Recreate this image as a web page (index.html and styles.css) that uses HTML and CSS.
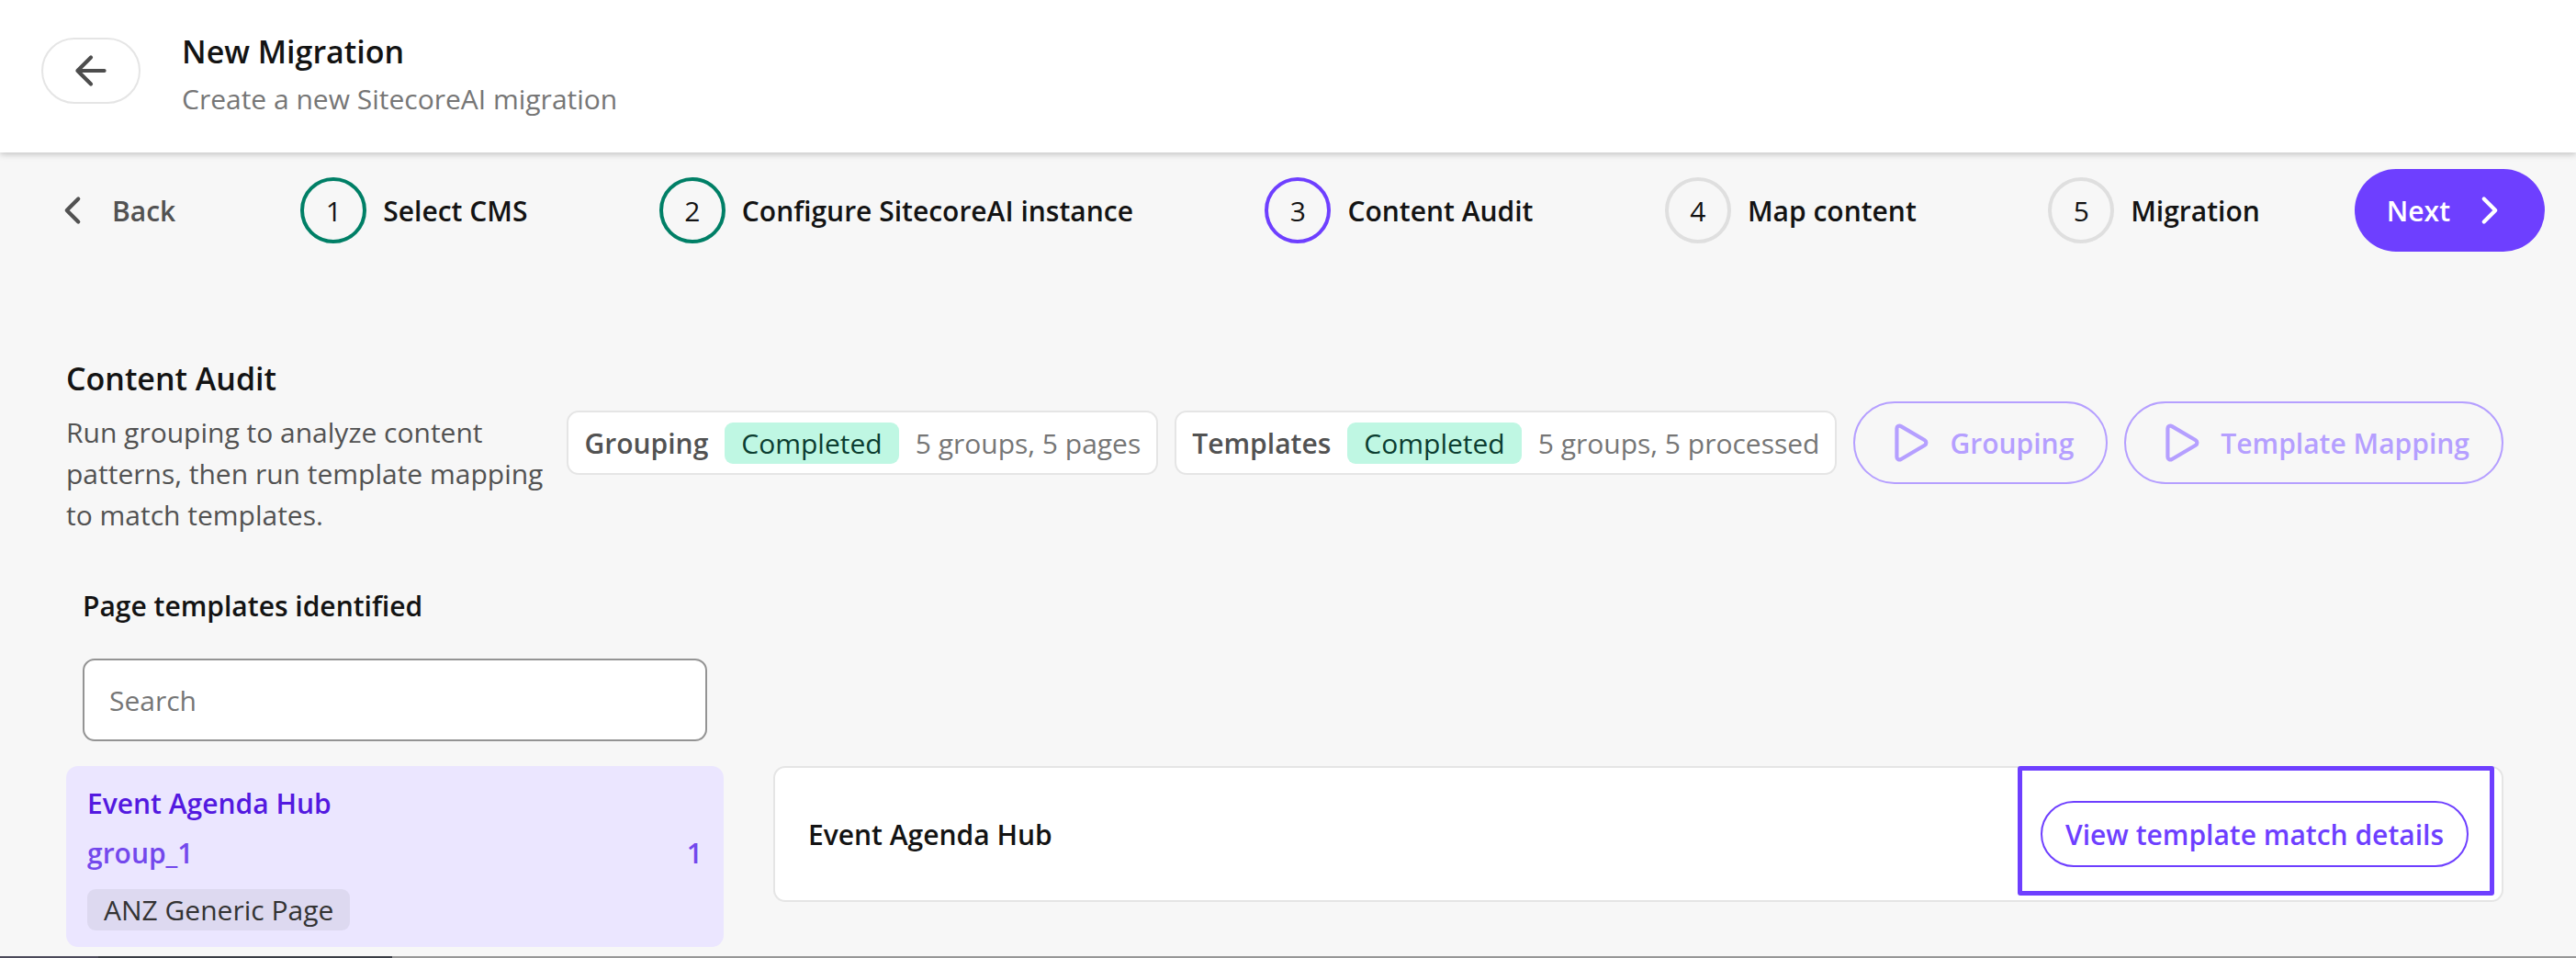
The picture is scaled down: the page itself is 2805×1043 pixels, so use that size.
FILE: index.html
```
<!DOCTYPE html>
<html lang="en">
<head>
<meta charset="utf-8">
<meta name="viewport" content="width=device-width, initial-scale=1">
<title>New Migration</title>
<link rel="stylesheet" href="styles.css">
</head>
<body>
<header class="topbar">
  <button class="back-button" type="button" aria-label="Go back">
    <svg class="icon" viewBox="0 0 24 24" aria-hidden="true"><path d="M19 12H5M12 5l-7 7 7 7"/></svg>
  </button>
  <div class="topbar-text">
    <h1 class="title">New Migration</h1>
    <p class="subtitle">Create a new SitecoreAI migration</p>
  </div>
</header>
<main>
  <nav class="stepper" aria-label="Migration steps">
    <button class="step-back" type="button">
      <svg class="icon" viewBox="0 0 24 24" aria-hidden="true"><path d="M15 6l-6 6 6 6"/></svg>
      Back
    </button>
    <ol class="steps">
      <li class="step"><span class="step-number done">1</span>Select CMS</li>
      <li class="step"><span class="step-number done">2</span>Configure SitecoreAI instance</li>
      <li class="step" aria-current="step"><span class="step-number current">3</span>Content Audit</li>
      <li class="step"><span class="step-number">4</span>Map content</li>
      <li class="step"><span class="step-number">5</span>Migration</li>
    </ol>
    <button class="step-next" type="button">
      Next
      <svg class="icon" viewBox="0 0 24 24" aria-hidden="true"><path d="M9 6l6 6-6 6"/></svg>
    </button>
  </nav>

  <section class="audit">
    <div class="audit-intro">
      <h2 class="title">Content Audit</h2>
      <p class="audit-copy">Run grouping to analyze content patterns, then run template mapping to match templates.</p>
    </div>
    <div class="audit-tools">
      <div class="status"><strong class="status-name">Grouping</strong><span class="badge">Completed</span><span>5 groups, 5 pages</span></div>
      <div class="status"><strong class="status-name">Templates</strong><span class="badge">Completed</span><span>5 groups, 5 processed</span></div>
      <button class="run-button" type="button" disabled>
        <svg class="icon" viewBox="0 0 24 24" aria-hidden="true"><path d="M5 4.600v14.800c0 1.200 1.200 1.800 2.200 1.200l12.400-7.300c1-.6 1-2 0-2.600L7.200 3.400C6.200 2.800 5 3.400 5 4.600z"/></svg>
        Grouping
      </button>
      <button class="run-button" type="button" disabled>
        <svg class="icon" viewBox="0 0 24 24" aria-hidden="true"><path d="M5 4.600v14.800c0 1.200 1.200 1.800 2.200 1.200l12.400-7.300c1-.6 1-2 0-2.600L7.200 3.400C6.200 2.800 5 3.400 5 4.600z"/></svg>
        Template Mapping
      </button>
    </div>
  </section>

  <section class="templates">
    <div class="template-list">
      <div class="template-search">
        <label class="search-label" for="search">Page templates identified</label>
        <input class="search-input" id="search" type="search" placeholder="Search">
      </div>
      <a class="template-item" href="#details">
        <span class="template-name">Event Agenda Hub</span>
        <span class="template-meta"><span>group_1</span><span>1</span></span>
        <span class="tag">ANZ Generic Page</span>
      </a>
    </div>
    <article class="detail-card" id="details">
      <h3 class="detail-title">Event Agenda Hub</h3>
      <div class="highlight">
        <button class="details-button" type="button">View template match details</button>
      </div>
    </article>
  </section>
</main>
<div class="bottom-edge"></div>
</body>
</html>
```
FILE: styles.css
```
* {
  box-sizing: border-box;
}

body {
  margin: 0;
  min-height: 100vh;
  display: flex;
  flex-direction: column;
  background: #f7f7f7;
  color: #131313;
  font: 400 30px/45px "Open Sans", "Noto Sans", sans-serif;
}

h1, h2, h3, p, ol {
  margin: 0;
  padding: 0;
}

button, input {
  font: inherit;
  color: inherit;
}

button {
  display: flex;
  align-items: center;
  justify-content: center;
  flex: none;
  padding: 0;
  border: 0;
  background: none;
  white-space: nowrap;
}

main {
  flex: 1;
}

.icon {
  width: 50px;
  height: 50px;
  flex: none;
  fill: none;
  stroke: currentColor;
  stroke-width: 2;
  stroke-linecap: round;
  stroke-linejoin: round;
}

.topbar {
  display: flex;
  align-items: flex-start;
  gap: 45px;
  height: 166px;
  padding: 29px 45px 0;
  background: #fff;
  box-shadow: 0 2px 7px rgba(0, 0, 0, .22);
}

.back-button {
  width: 108px;
  height: 72px;
  margin-top: 12px;
  border: 2px solid #e5e5e5;
  border-radius: 36px;
  color: #4d4d4d;
}

.title {
  font-size: 34px;
  line-height: 54px;
  font-weight: 600;
}

.topbar .title {
  margin-bottom: 2px;
}

.subtitle {
  color: #767676;
}

.stepper {
  display: flex;
  align-items: center;
  height: 126px;
  padding: 0 34px 0 54px;
  font-weight: 600;
}

.step-back {
  gap: 18px;
  color: #525252;
}

.steps {
  flex: 1;
  display: flex;
  justify-content: space-between;
  padding: 0 103px 0 136px;
  list-style: none;
}

.step {
  display: flex;
  align-items: center;
  gap: 18px;
  white-space: nowrap;
}

.step-number {
  display: flex;
  align-items: center;
  justify-content: center;
  width: 72px;
  height: 72px;
  border: 4px solid #dfdfdf;
  border-radius: 50%;
  font-weight: 400;
}

.step-number.done {
  border-color: #007f66;
}

.step-number.current {
  border-color: #6e3fff;
}

.step-next {
  height: 90px;
  gap: 18px;
  padding: 0 35px;
  border-radius: 45px;
  background: #6e3fff;
  color: #fff;
}

.audit {
  display: flex;
  align-items: center;
  justify-content: space-between;
  gap: 18px;
  padding: 93px 79px 0 72px;
}

.audit-intro {
  flex: 1;
}

.audit-copy {
  padding-top: 9px;
  color: #525252;
}

.audit-tools {
  display: flex;
  align-items: center;
  gap: 18px;
  padding-bottom: 4px;
}

.status {
  display: flex;
  align-items: center;
  gap: 18px;
  height: 70px;
  padding: 0 17px;
  border: 2px solid #e5e5e5;
  border-radius: 13px;
  background: #fff;
  color: #767676;
  white-space: nowrap;
}

.status-name {
  font-weight: 600;
  color: #525252;
}

.badge {
  padding: 0 18px;
  border-radius: 9px;
  background: #bff7e3;
  color: #0b3d30;
}

.run-button {
  height: 90px;
  gap: 18px;
  padding: 0 35px;
  border: 2px solid #b59fff;
  border-radius: 45px;
  color: #b59fff;
  font-weight: 600;
}

.templates {
  display: flex;
  align-items: flex-end;
  gap: 54px;
  padding: 54px 79px 0 72px;
}

.template-list {
  flex: none;
  width: 716px;
}

.template-search {
  padding: 0 18px 27px;
}

.search-label {
  display: block;
  padding-bottom: 35px;
  font-weight: 600;
}

.search-input {
  display: block;
  width: 100%;
  height: 90px;
  padding: 0 27px;
  border: 2px solid #949494;
  border-radius: 13px;
  background: #fff;
}

.search-input::placeholder {
  color: #767676;
  opacity: 1;
}

.template-item {
  display: flex;
  flex-direction: column;
  align-items: flex-start;
  gap: 9px;
  padding: 18px 23px;
  border-radius: 13px;
  background: #ebe6ff;
  color: #7348ec;
  font-weight: 600;
  text-decoration: none;
}

.template-name {
  color: #5319e0;
}

.template-meta {
  align-self: stretch;
  display: flex;
  justify-content: space-between;
}

.tag {
  margin-top: 8px;
  padding: 0 18px;
  border-radius: 9px;
  background: #ddd9f0;
  color: #333;
  font-weight: 400;
}

.detail-card {
  flex: 1;
  display: flex;
  align-items: flex-start;
  justify-content: space-between;
  height: 148px;
  margin-bottom: 49px;
  padding-right: 8px;
  border: 2px solid #e5e5e5;
  border-radius: 13px;
  background: #fff;
}

.detail-title {
  padding: 50px 36px;
  font-size: 30px;
  font-weight: 600;
}

.highlight {
  margin-top: -2px;
  padding: 33px 23px 26px 20px;
  border: 5px solid #6e3fff;
  border-radius: 3px;
}

.details-button {
  height: 72px;
  padding: 0 25px;
  border: 2px solid #6e3fff;
  border-radius: 36px;
  color: #6e3fff;
  font-weight: 600;
}

.bottom-edge {
  height: 2px;
  background: linear-gradient(to right, #4c4a5a 107px, #3a3d44 107px 427px, #979797 427px);
}
```
